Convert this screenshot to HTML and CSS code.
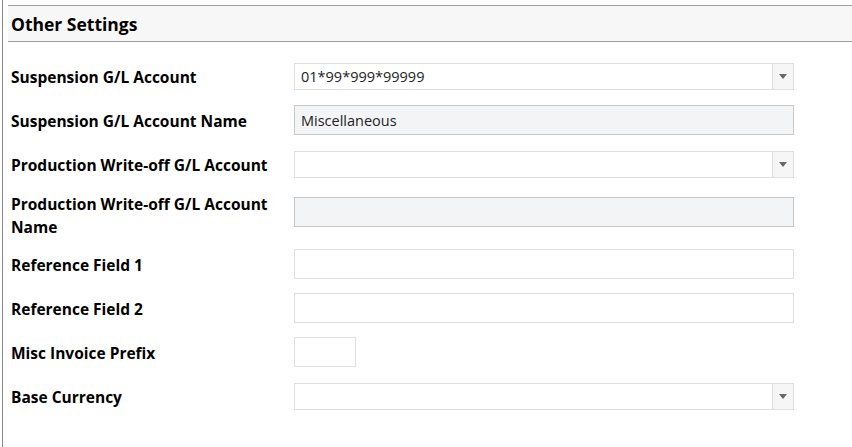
FILE: index.html
```html
<!DOCTYPE html>
<html>
<head>
<meta charset="utf-8">
<link rel="stylesheet" href="styles.css">
</head>
<body>
<div class="page">
  <div class="section-header">Other Settings</div>
  <div class="form">
    <div class="row">
      <label class="label">Suspension G/L Account</label>
      <div class="combo">
        <span class="combo-value">01*99*999*99999</span>
        <span class="combo-btn"><span class="caret"></span></span>
      </div>
    </div>
    <div class="row">
      <label class="label">Suspension G/L Account Name</label>
      <input class="field readonly" type="text" value="Miscellaneous" readonly>
    </div>
    <div class="row">
      <label class="label">Production Write-off G/L Account</label>
      <div class="combo">
        <span class="combo-value"></span>
        <span class="combo-btn"><span class="caret"></span></span>
      </div>
    </div>
    <div class="row row-tall">
      <label class="label">Production Write-off G/L Account Name</label>
      <input class="field readonly raised" type="text" value="" readonly>
    </div>
    <div class="row">
      <label class="label">Reference Field 1</label>
      <input class="field" type="text" value="">
    </div>
    <div class="row">
      <label class="label">Reference Field 2</label>
      <input class="field" type="text" value="">
    </div>
    <div class="row">
      <label class="label">Misc Invoice Prefix</label>
      <input class="field short" type="text" value="">
    </div>
    <div class="row">
      <label class="label">Base Currency</label>
      <div class="combo">
        <span class="combo-value"></span>
        <span class="combo-btn"><span class="caret"></span></span>
      </div>
    </div>
  </div>
</div>
</body>
</html>
```

FILE: styles.css
```css
* { box-sizing: border-box; }
html, body {
  margin: 0;
  padding: 0;
  background: #ffffff;
}
body {
  font-family: "Open Sans", "Noto Sans", sans-serif;
  color: #000;
}
.page {
  margin-left: 2px;
  border-left: 1px solid #8a8a8a;
  padding-top: 5px;
  min-height: 447px;
}
.section-header {
  margin-left: 5px;
  height: 37px;
  border-top: 1px solid #a0a0a0;
  border-bottom: 1px solid #a0a0a0;
  background: #f7f7f7;
  padding-left: 3px;
  padding-top: 2px;
  font-weight: 700;
  font-size: 17.5px;
  line-height: 33px;
}
.form {
  margin-top: 12px;
  padding-left: 8px;
  display: flex;
  flex-direction: column;
}
.row {
  display: flex;
  align-items: center;
  min-height: 44px;
}
.row-tall {
  min-height: 56px;
}
.label {
  width: 283px;
  flex: none;
  font-weight: 700;
  font-size: 15.5px;
  line-height: 23px;
  padding-right: 10px;
  padding-top: 3px;
}
.field {
  width: 500px;
  height: 30px;
  border: 1px solid #e0e0e0;
  background: #fff;
  font-family: "Open Sans", "Noto Sans", sans-serif;
  font-size: 14.5px;
  color: #222;
  padding: 0 6px;
  margin: 0;
  outline: none;
}
.readonly {
  background: #f3f4f6;
  border-color: #c8c8c8;
}
.raised {
  margin-bottom: 4px;
}
.short {
  width: 62px;
}
.combo {
  width: 500px;
  height: 27px;
  border: 1px solid #dedede;
  background: #fff;
  display: flex;
  align-items: stretch;
}
.combo-value {
  flex: 1;
  font-size: 14.5px;
  line-height: 25px;
  color: #222;
  padding-left: 6px;
}
.combo-btn {
  width: 21px;
  border-left: 1px solid #dedede;
  background: #f6f6f6;
  display: flex;
  align-items: center;
  justify-content: center;
}
.caret {
  width: 0;
  height: 0;
  border-left: 4px solid transparent;
  border-right: 4px solid transparent;
  border-top: 5px solid #666;
}
```
